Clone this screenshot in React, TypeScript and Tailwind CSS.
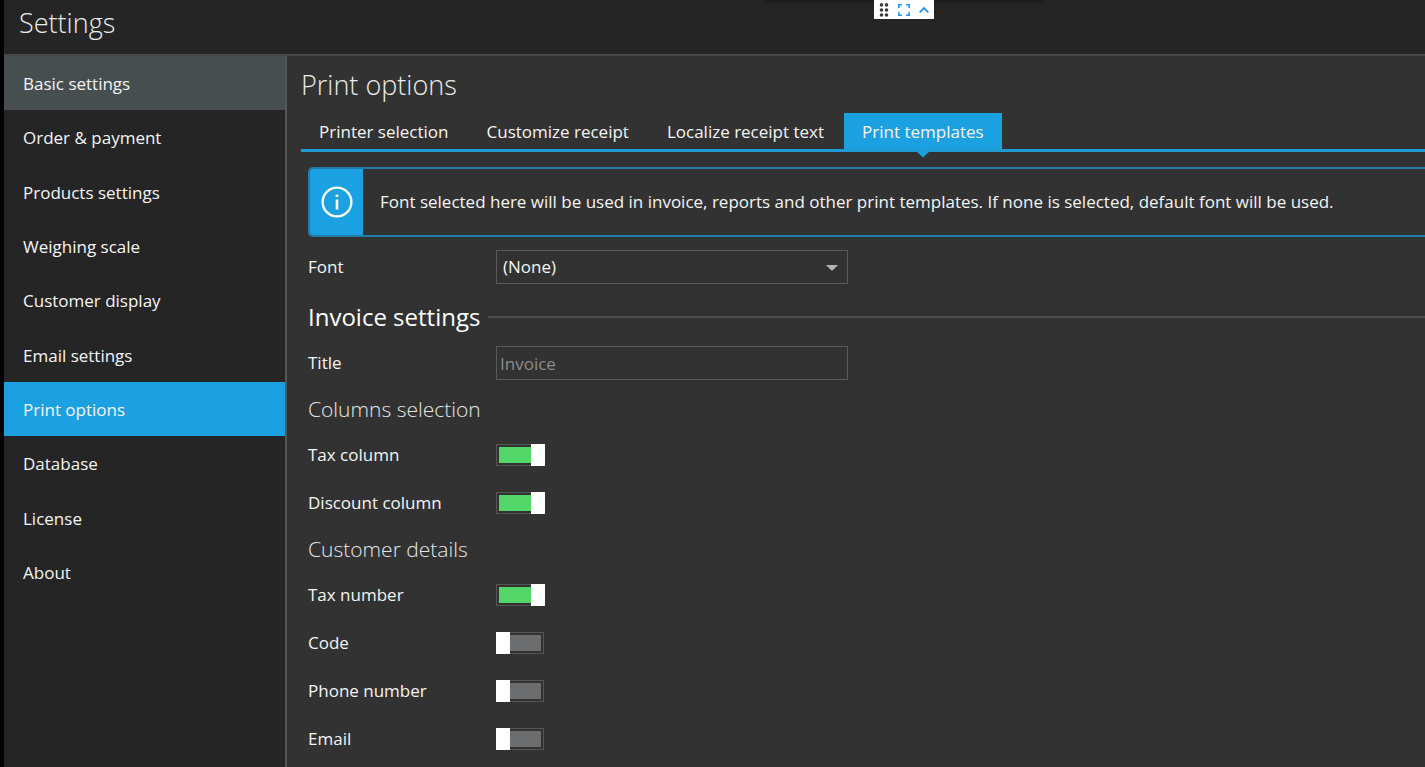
import { useState } from "react";

const sections = [
  "Basic settings",
  "Order & payment",
  "Products settings",
  "Weighing scale",
  "Customer display",
  "Email settings",
  "Print options",
  "Database",
  "License",
  "About",
];

const tabs = ["Printer selection", "Customize receipt", "Localize receipt text", "Print templates"];

function FloatingToolbar() {
  return (
    <div className="absolute top-0 right-[383px] left-[762px] flex h-0 justify-center shadow-[0_0_3px_1px_#141414]">
      <div className="flex h-[19px] w-[60px] items-center justify-between bg-white px-[5px]">
        <button type="button" aria-label="Move toolbar">
          <svg width="10" height="14" viewBox="0 0 10 14" fill="#3c3c3c" className="block">
            <circle cx="2.5" cy="1.9" r="1.8" />
            <circle cx="7.5" cy="1.9" r="1.8" />
            <circle cx="2.5" cy="7" r="1.8" />
            <circle cx="7.5" cy="7" r="1.8" />
            <circle cx="2.5" cy="12" r="1.8" />
            <circle cx="7.5" cy="12" r="1.8" />
          </svg>
        </button>
        <button type="button" aria-label="Full screen">
          <svg width="12" height="12" viewBox="0 0 12 12" fill="none" stroke="#2196f3" strokeWidth="1.6" className="block">
            <path d="M0.8 4V0.8H4M8 0.8H11.2V4M11.2 8V11.2H8M4 11.2H0.8V8" />
          </svg>
        </button>
        <button type="button" aria-label="Collapse toolbar">
          <svg width="10" height="8" viewBox="0 0 10 8" fill="none" stroke="#2196f3" strokeWidth="1.9" className="block">
            <path d="M0.7 6.3L5 2L9.3 6.3" />
          </svg>
        </button>
      </div>
    </div>
  );
}

function Toggle({ id, label, initial }: { id: string; label: string; initial: boolean }) {
  const [on, setOn] = useState(initial);
  return (
    <div className="flex h-12 items-center">
      <label htmlFor={id} className="w-[188px]">
        {label}
      </label>
      <input
        id={id}
        type="checkbox"
        role="switch"
        checked={on}
        onChange={(e) => setOn(e.target.checked)}
        className="relative h-[22px] w-12 appearance-none border border-[#555753] bg-[#6b6d6f] bg-clip-content p-[2px] after:absolute after:-top-px after:-left-px after:h-[22px] after:w-[14px] after:bg-white checked:bg-[#53d769] checked:after:-right-[2px] checked:after:left-auto"
      />
    </div>
  );
}

function SubHeading({ children }: { children: string }) {
  return <h3 className="flex h-11 items-center text-[21px] font-light text-[#e6e6e6]">{children}</h3>;
}

export default function App() {
  const [section, setSection] = useState("Print options");
  const [tab, setTab] = useState("Print templates");
  return (
    <div className="relative flex min-h-screen flex-col overflow-hidden border-l-4 border-black bg-[#252525] font-['Open_Sans','Noto_Sans',sans-serif] text-[17px] leading-6 text-[#f5f5f5]">
      <FloatingToolbar />
      <header className="flex h-14 items-center border-b-2 border-[#464646] px-[15px] pb-2">
        <h1 className="text-[27px] leading-9 font-light text-[#ececec]">Settings</h1>
      </header>
      <div className="flex flex-1">
        <nav className="w-[283px] shrink-0 border-r-2 border-[#555753]">
          <div className="grid h-[543px] grid-rows-10">
            {sections.map((name, i) => (
              <button
                key={name}
                type="button"
                onClick={() => setSection(name)}
                className={`px-[19px] pt-[2px] text-left ${
                  name === section ? "bg-[#1ba1e2]" : i === 0 ? "bg-[#464e50]" : ""
                }`}
              >
                {name}
              </button>
            ))}
          </div>
        </nav>
        <main className="min-w-0 flex-1 bg-[#323232] pl-[14px]">
          <h2 className="flex h-[57px] items-center text-[27px] leading-9 font-light text-[#ececec]">
            Print options
          </h2>
          <div role="tablist" className="flex gap-[2px] border-b-[3px] border-[#1f9bd6]">
            {tabs.map((name) => (
              <button
                key={name}
                type="button"
                role="tab"
                aria-selected={name === tab}
                onClick={() => setTab(name)}
                className={`relative h-9 px-[18px] pt-[2px] whitespace-nowrap ${name === tab ? "bg-[#1ba1e2]" : ""}`}
              >
                {name}
                {name === tab && (
                  <svg
                    width="14"
                    height="7"
                    viewBox="0 0 14 7"
                    fill="#1ba1e2"
                    className="absolute top-full left-1/2 mt-[2px] -translate-x-1/2"
                  >
                    <path d="M0 0H14L7 6.5Z" />
                  </svg>
                )}
              </button>
            ))}
          </div>
          <div className="pt-[15px] pl-[7px]">
            <div className="mb-[6px] flex h-[70px] overflow-hidden rounded-l-[5px] border-2 border-r-0 border-[#217caa] bg-[#323232]">
              <div className="flex w-[53px] shrink-0 items-center justify-center bg-[#1ba1e2]">
                <svg width="32" height="32" viewBox="0 0 32 32" fill="none" stroke="#fff" strokeWidth="2.3">
                  <circle cx="16" cy="16" r="14.4" />
                  <path d="M16 13.5V23.5M16 8.5V11" strokeWidth="2.6" />
                </svg>
              </div>
              <p className="flex items-center pl-[17px] whitespace-nowrap">
                Font selected here will be used in invoice, reports and other print templates. If none is selected,
                default font will be used.
              </p>
            </div>
            <div className="flex h-12 items-center">
              <label htmlFor="font" className="w-[188px]">
                Font
              </label>
              <div className="relative w-[352px]">
                <select
                  id="font"
                  className="h-[34px] w-full appearance-none border border-[#5a5a5a] bg-[#323232] px-[6px]"
                >
                  <option>(None)</option>
                </select>
                <svg
                  width="12"
                  height="6"
                  viewBox="0 0 12 6"
                  fill="#b4b4b4"
                  className="pointer-events-none absolute top-[15px] right-[10px]"
                >
                  <path d="M0 0H12L6 6Z" />
                </svg>
              </div>
            </div>
            <div className="flex h-12 items-center gap-2 pt-1">
              <h3 className="text-[24px] leading-8 text-white">Invoice settings</h3>
              <hr className="flex-1 border-t-2 border-[#4d4d4d]" />
            </div>
            <div className="flex h-12 items-center">
              <label htmlFor="title" className="w-[188px]">
                Title
              </label>
              <input
                id="title"
                type="text"
                placeholder="Invoice"
                className="h-[34px] w-[352px] border border-[#5a5a5a] bg-transparent px-[3px] placeholder:text-[#8c8c8c]"
              />
            </div>
            <SubHeading>Columns selection</SubHeading>
            <Toggle id="tax-column" label="Tax column" initial={true} />
            <Toggle id="discount-column" label="Discount column" initial={true} />
            <SubHeading>Customer details</SubHeading>
            <Toggle id="tax-number" label="Tax number" initial={true} />
            <Toggle id="code" label="Code" initial={false} />
            <Toggle id="phone-number" label="Phone number" initial={false} />
            <Toggle id="email" label="Email" initial={false} />
          </div>
        </main>
      </div>
    </div>
  );
}
